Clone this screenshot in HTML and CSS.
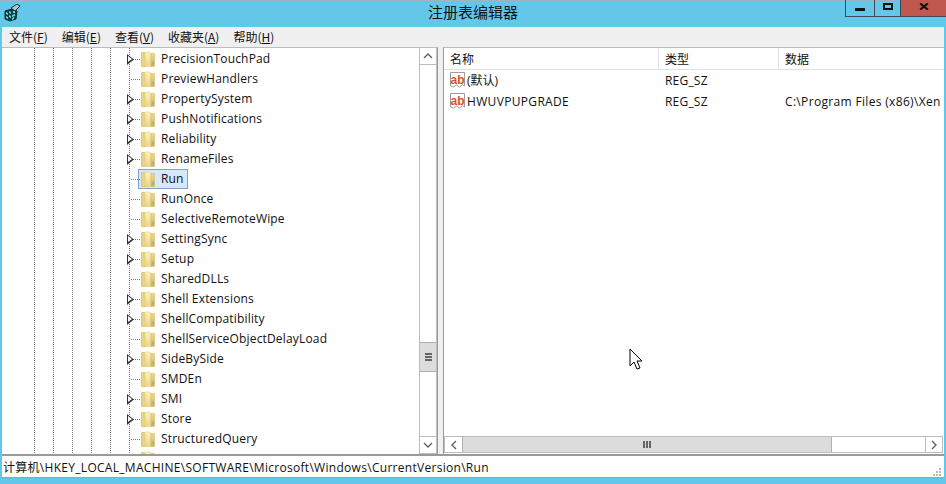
FILE: index.html
```html
<!DOCTYPE html>
<html lang="zh-CN">
<head>
<meta charset="utf-8">
<title>注册表编辑器</title>
<link rel="stylesheet" href="styles.css">
</head>
<body>
<svg class="defs" width="0" height="0" aria-hidden="true">
  <defs>
    <linearGradient id="fmid" x1="0" y1="0" x2="0" y2="1">
      <stop offset="0" stop-color="#fbf2bd"/>
      <stop offset="1" stop-color="#eed487"/>
    </linearGradient>
    <linearGradient id="fright" x1="0" y1="0" x2="0" y2="1">
      <stop offset="0" stop-color="#f0d98a"/>
      <stop offset="1" stop-color="#d6b355"/>
    </linearGradient>
  </defs>
  <symbol id="folder" viewBox="0 0 14 16">
    <path d="M0.5 1.5h3l1 0.5v13.5h-4z" fill="#e9d484" stroke="#d4ba6e" stroke-width="0.7"/>
    <path d="M4 1h5l1 1v13.5H4z" fill="url(#fmid)" stroke="#dcc57c" stroke-width="0.5"/>
    <path d="M10 2.5h3.5v13H10z" fill="url(#fright)" stroke="#cfb060" stroke-width="0.5"/>
    <path d="M11.5 10.5h1.5v3h-1.5z" fill="#6cb2e0"/>
  </symbol>
  <symbol id="ab" viewBox="0 0 17 17">
    <path d="M1.5 0.5h14v13.5l-2-1.2-3 2.2-3-2-3 2-3-1.2z" fill="#fff" stroke="#9c9c9c"/>
    <text x="8.5" y="11.5" class="ab-text">ab</text>
  </symbol>
</svg>
<div class="window">
  <header class="titlebar">
    <svg class="app-icon" width="17" height="18" viewBox="0 0 17 18">
      <path d="M1 7l7-2 5 2-1 8-6 2-5-2z" fill="#0f3f4a" stroke="#0b2a33"/>
      <path d="M2 8l2 1v2l-2-1zM5 7l2 1v2l-2-1zM9 7l2 0v2l-2 0zM2 12l2 1v2l-2-1zM5 11l2 1v2l-2-1zM8 11l3-1v2l-3 1zM8 14l2-1v2l-2 1z" fill="#63d8d4"/>
      <path d="M7 4l6-4 3 2-5 5z" fill="#b9c4c8" stroke="#1d2a30"/>
    </svg>
    <h1 class="title">注册表编辑器</h1>
    <div class="controls">
      <span class="ctl ctl-min"><i class="glyph-min"></i></span>
      <span class="ctl ctl-max"><i class="glyph-max"></i></span>
      <span class="ctl ctl-close">
        <svg width="10" height="7" viewBox="0 0 10 7"><path d="M1.2 0.5L8.8 6.5M8.8 0.5L1.2 6.5" stroke="#111" stroke-width="2.2" fill="none"/></svg>
      </span>
    </div>
  </header>
  <div class="inner">
    <nav class="menubar">
      <span class="menu">文件(<u>F</u>)</span>
      <span class="menu">编辑(<u>E</u>)</span>
      <span class="menu">查看(<u>V</u>)</span>
      <span class="menu">收藏夹(<u>A</u>)</span>
      <span class="menu">帮助(<u>H</u>)</span>
    </nav>
    <main class="panes">
      <section class="tree-pane">
        <div class="tree">
          <div class="row"><span class="exp"></span><svg class="folder"><use href="#folder"/></svg><span class="label">PrecisionTouchPad</span></div>
          <div class="row leaf"><span class="exp"></span><svg class="folder"><use href="#folder"/></svg><span class="label">PreviewHandlers</span></div>
          <div class="row"><span class="exp"></span><svg class="folder"><use href="#folder"/></svg><span class="label">PropertySystem</span></div>
          <div class="row"><span class="exp"></span><svg class="folder"><use href="#folder"/></svg><span class="label">PushNotifications</span></div>
          <div class="row"><span class="exp"></span><svg class="folder"><use href="#folder"/></svg><span class="label">Reliability</span></div>
          <div class="row"><span class="exp"></span><svg class="folder"><use href="#folder"/></svg><span class="label">RenameFiles</span></div>
          <div class="row leaf selected"><span class="exp"></span><span class="sel-box"><svg class="folder"><use href="#folder"/></svg><span class="label">Run</span></span></div>
          <div class="row leaf"><span class="exp"></span><svg class="folder"><use href="#folder"/></svg><span class="label">RunOnce</span></div>
          <div class="row leaf"><span class="exp"></span><svg class="folder"><use href="#folder"/></svg><span class="label">SelectiveRemoteWipe</span></div>
          <div class="row"><span class="exp"></span><svg class="folder"><use href="#folder"/></svg><span class="label">SettingSync</span></div>
          <div class="row"><span class="exp"></span><svg class="folder"><use href="#folder"/></svg><span class="label">Setup</span></div>
          <div class="row leaf"><span class="exp"></span><svg class="folder"><use href="#folder"/></svg><span class="label">SharedDLLs</span></div>
          <div class="row"><span class="exp"></span><svg class="folder"><use href="#folder"/></svg><span class="label">Shell Extensions</span></div>
          <div class="row"><span class="exp"></span><svg class="folder"><use href="#folder"/></svg><span class="label">ShellCompatibility</span></div>
          <div class="row leaf"><span class="exp"></span><svg class="folder"><use href="#folder"/></svg><span class="label">ShellServiceObjectDelayLoad</span></div>
          <div class="row"><span class="exp"></span><svg class="folder"><use href="#folder"/></svg><span class="label">SideBySide</span></div>
          <div class="row leaf"><span class="exp"></span><svg class="folder"><use href="#folder"/></svg><span class="label">SMDEn</span></div>
          <div class="row"><span class="exp"></span><svg class="folder"><use href="#folder"/></svg><span class="label">SMI</span></div>
          <div class="row"><span class="exp"></span><svg class="folder"><use href="#folder"/></svg><span class="label">Store</span></div>
          <div class="row leaf"><span class="exp"></span><svg class="folder"><use href="#folder"/></svg><span class="label">StructuredQuery</span></div>
          <div class="row leaf"><span class="exp"></span><svg class="folder"><use href="#folder"/></svg><span class="label">Sysprep</span></div>
        </div>
        <div class="vscroll">
          <span class="sb-btn"><svg width="10" height="6" viewBox="0 0 10 6"><path d="M1 5l4-4 4 4" fill="none" stroke="#606060" stroke-width="1.4"/></svg></span>
          <div class="vtrack">
            <span class="vthumb"><i></i><i></i><i></i></span>
          </div>
          <span class="sb-btn"><svg width="10" height="6" viewBox="0 0 10 6"><path d="M1 1l4 4 4-4" fill="none" stroke="#606060" stroke-width="1.4"/></svg></span>
        </div>
      </section>
      <section class="list-pane">
        <div class="list-head">
          <span class="col col-name">名称</span>
          <span class="col col-type">类型</span>
          <span class="col col-data">数据</span>
        </div>
        <div class="list-body">
          <div class="item">
            <span class="cell col-name"><svg class="ab"><use href="#ab"/></svg><span class="cjk">(默认)</span></span>
            <span class="cell col-type">REG_SZ</span>
            <span class="cell col-data"></span>
          </div>
          <div class="item">
            <span class="cell col-name"><svg class="ab"><use href="#ab"/></svg>HWUVPUPGRADE</span>
            <span class="cell col-type">REG_SZ</span>
            <span class="cell col-data">C:\Program Files (x86)\Xen</span>
          </div>
        </div>
        <svg class="cursor" width="14" height="23" viewBox="0 0 14 23"><path d="M1 1v17l4-4 3 7 3-1-3-7h5z" fill="#fff" stroke="#000"/></svg>
        <div class="hscroll">
          <span class="sb-btn sb-h"><svg width="6" height="10" viewBox="0 0 6 10"><path d="M5 1L1 5l4 4" fill="none" stroke="#606060" stroke-width="1.4"/></svg></span>
          <div class="htrack"><span class="hthumb"><i></i><i></i><i></i></span></div>
          <span class="sb-btn sb-h sb-right"><svg width="6" height="10" viewBox="0 0 6 10"><path d="M1 1l4 4-4 4" fill="none" stroke="#606060" stroke-width="1.4"/></svg></span>
        </div>
      </section>
    </main>
    <footer class="status">
      <span class="path">计算机\HKEY_LOCAL_MACHINE\SOFTWARE\Microsoft\Windows\CurrentVersion\Run</span>
      <svg class="grip" width="10" height="10" viewBox="0 0 10 10"><path d="M7 1h2v2H7zM4 4h2v2H4zM7 4h2v2H7zM1 7h2v2H1zM4 7h2v2H4zM7 7h2v2H7z" fill="#b8b8b8"/></svg>
    </footer>
  </div>
</div>
</body>
</html>
```

FILE: styles.css
```css
* { box-sizing: border-box; }
html, body { margin: 0; height: 100%; overflow: hidden; }
body { font-family: "Open Sans", "Noto Sans CJK SC", sans-serif; font-size: 12px; color: #111; background: #63c7ea; }
.defs { position: absolute; }
.window { width: 946px; height: 484px; display: flex; flex-direction: column; background: #63c7ea; border-top: 1px solid #9fb4bf; padding: 0 2px 6px; }
.titlebar { height: 26px; flex: none; display: grid; grid-template-columns: 1fr auto 1fr; align-items: start; margin: 0 -2px; }
.app-icon { margin: 3px 0 0 4px; }
.title { margin: 0; padding-top: 0; font-size: 15px; font-weight: 400; line-height: 22px; color: #111; font-family: "Noto Sans CJK SC", sans-serif; }
.controls { justify-self: end; display: flex; height: 17px; margin-top: -1px; border-left: 1px solid #3c4a52; border-bottom: 1px solid #3c4a52; }
.ctl { display: flex; align-items: center; justify-content: center; height: 100%; }
.ctl-min { width: 29px; border-right: 1px solid #3c4a52; }
.ctl-max { width: 26px; border-right: 1px solid #3c4a52; }
.ctl-close { width: 45px; background: #c1584f; }
.glyph-min { display: block; width: 10px; height: 3px; background: #111; margin-top: 3px; }
.glyph-max { display: block; width: 10px; height: 7px; border: 2px solid #111; margin-top: -3px; }
.ctl-close svg { margin-top: -3px; }
.inner { flex: 1; min-height: 0; display: flex; flex-direction: column; background: #f0f0f0; }
.menubar { height: 20px; flex: none; display: flex; padding-left: 7px; align-items: flex-start; gap: 14px; font-family: "Noto Sans CJK SC", sans-serif; }
.menu { line-height: 19px; }
.panes { flex: 1; min-height: 0; display: flex; gap: 5px; border-bottom: 2px solid #9a9a9a; }
.tree-pane { width: 436px; flex: none; display: flex; background: #fff; border-top: 1px solid #bcbcbc; border-right: 1px solid #9a9a9a; overflow: hidden; }
.tree {
  flex: 1; min-width: 0; overflow: hidden; padding: 1px 0 0 126px;
  background-image:
    repeating-linear-gradient(to bottom, #777 0 1px, transparent 1px 2px),
    repeating-linear-gradient(to bottom, #777 0 1px, transparent 1px 2px),
    repeating-linear-gradient(to bottom, #777 0 1px, transparent 1px 2px),
    repeating-linear-gradient(to bottom, #777 0 1px, transparent 1px 2px),
    repeating-linear-gradient(to bottom, #777 0 1px, transparent 1px 2px),
    repeating-linear-gradient(to bottom, #777 0 1px, transparent 1px 2px);
  background-size: 1px 100%;
  background-repeat: no-repeat;
  background-position: 32px 0, 51px 0, 70px 0, 89px 0, 108px 0, 127px 0;
}
.row { height: 20px; display: flex; align-items: center; white-space: nowrap; }
.exp { width: 12px; height: 20px; flex: none; margin-right: 1px; position: relative;
  background: repeating-linear-gradient(to right, #777 0 1px, transparent 1px 2px) no-repeat 3px 10px / 9px 1px; }
.exp::before { content: ""; position: absolute; left: -1px; top: 5px; width: 7px; height: 11px; background: #333;
  clip-path: polygon(0 0, 100% 50%, 0 100%); }
.exp::after { content: ""; position: absolute; left: 0; top: 7px; border-left: 4px solid #fff; border-top: 3.5px solid transparent; border-bottom: 3.5px solid transparent; }
.leaf .exp::before, .leaf .exp::after { display: none; }
.folder { width: 14px; height: 16px; flex: none; }
.label { margin-left: 6px; line-height: 20px; letter-spacing: .17px; }
.sel-box { display: flex; align-items: center; height: 20px; margin-left: -3px; padding: 0 3px 0 2px; background: #d6e9fa; border: 1px solid #7da2ce; }
.sel-box .label { margin-left: 6px; }
.vscroll { width: 18px; flex: none; display: flex; flex-direction: column; background: #fff; border: 1px solid #bcbcbc; border-top: 0; }
.sb-btn { height: 17px; flex: none; display: flex; align-items: center; justify-content: center; background: #fff; }
.vscroll .sb-btn:first-child { border-bottom: 1px solid #bcbcbc; }
.vscroll .sb-btn:last-child { border-top: 1px solid #bcbcbc; }
.vtrack { flex: 1; padding-top: 277px; }
.vthumb { display: flex; flex-direction: column; align-items: center; justify-content: center; gap: 1px; height: 30px; background: #dcdcdc; border-top: 1px solid #b0b0b0; border-bottom: 1px solid #b0b0b0; }
.vthumb i { display: block; width: 7px; height: 2px; background: #666; }
.list-pane { flex: 1; min-width: 0; display: flex; flex-direction: column; background: #fff; border-top: 1px solid #bcbcbc; border-left: 1px solid #9a9a9a; position: relative; }
.list-head { height: 22px; flex: none; display: flex; align-items: stretch; border-bottom: 1px solid #e0e0e0; font-family: "Noto Sans CJK SC", sans-serif; }
.col { line-height: 21px; padding-left: 6px; border-right: 1px solid #e3e3e3; }
.col-name { width: 215px; flex: none; }
.col-type { width: 120px; flex: none; }
.col-data { flex: 1; border-right: 0; min-width: 0; }
.list-body { flex: 1; min-height: 0; }
.item { height: 21px; display: flex; align-items: center; white-space: nowrap; overflow: hidden; letter-spacing: .33px; }
.cell { padding-left: 6px; line-height: 20px; display: flex; align-items: center; }
.item .col-name { padding-left: 5px; }
.item .col-type { letter-spacing: .2px; }
.cjk { letter-spacing: 0; }
.ab { width: 17px; height: 17px; flex: none; margin-right: 1px; }
.ab-text { font: 700 12px "Liberation Sans", sans-serif; fill: #d8502c; text-anchor: middle; letter-spacing: 0; }
.cursor { position: absolute; left: 185px; top: 300px; }
.hscroll { height: 17px; flex: none; display: flex; border: 1px solid #bcbcbc; margin-right: 1px; background: #fff; margin-bottom: 1px; }
.sb-h { width: 17px; height: 100%; }
.sb-right { border-left: 1px solid #bcbcbc; }
.htrack { flex: 1; display: flex; background: #fff; }
.hthumb { width: 370px; display: flex; gap: 1px; align-items: center; justify-content: center; background: #dcdcdc; border-left: 1px solid #b0b0b0; border-right: 1px solid #b0b0b0; }
.hthumb i { display: block; width: 2px; height: 7px; background: #666; }
.status { height: 22px; flex: none; display: flex; align-items: center; justify-content: space-between; background: #fff; padding: 2px 2px 0 1px; border-bottom: 1px solid #a0a0a0; }
.path { line-height: 18px; letter-spacing: .29px; }
.grip { align-self: flex-end; margin-bottom: 0; }
```
